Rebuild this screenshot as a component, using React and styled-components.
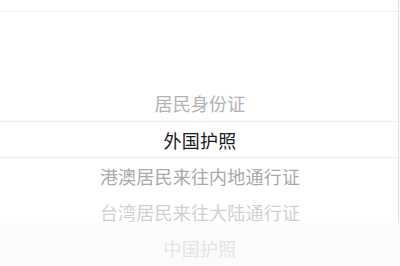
import React from 'react';
import styled, { createGlobalStyle } from 'styled-components';

const GlobalStyle = createGlobalStyle`
  html, body {
    margin: 0;
    padding: 0;
    background: #fff;
  }
  body {
    font-family: "Noto Sans CJK SC", "Noto Sans", sans-serif;
  }
`;

const Screen = styled.div`
  width: 400px;
  height: 266px;
  overflow: hidden;
  display: flex;
  flex-direction: column;
  background: linear-gradient(to bottom, #fff 0, #fff 223px, #fdfafa 224px);
`;

const Panel = styled.div`
  width: 398px;
  height: 223px;
  border-right: 1px solid #dedede;
  display: flex;
  flex-direction: column;
  flex-shrink: 0;
`;

const TopBar = styled.div`
  height: 11px;
  border-bottom: 1px solid #f0f0f0;
  flex-shrink: 0;
`;

const Wheel = styled.ul`
  list-style: none;
  margin: 0;
  padding: 73px 0 0;
  width: 400px;
  display: flex;
  flex-direction: column;
`;

const Option = styled.li`
  height: 36px;
  flex-shrink: 0;
  display: flex;
  align-items: center;
  justify-content: center;
  font-size: 18px;
  letter-spacing: 0.2px;
  color: ${p => p.$tone};
  box-sizing: border-box;
  ${p => p.$active && `
    border-top: 1px solid #ececec;
    border-bottom: 1px solid #ececec;
    height: 37px;
  `}
`;

const options = [
  { label: '居民身份证', tone: '#b2b2b2' },
  { label: '外国护照', tone: '#1a1a1a', active: true },
  { label: '港澳居民来往内地通行证', tone: '#a9a9a9' },
  { label: '台湾居民来往大陆通行证', tone: '#d0d0d0' },
  { label: '中国护照', tone: '#e4e4e4' },
];

export default function App() {
  return (
    <>
      <GlobalStyle />
      <Screen>
        <Panel>
          <TopBar />
          <Wheel>
            {options.map(o => (
              <Option key={o.label} $tone={o.tone} $active={o.active}>
                {o.label}
              </Option>
            ))}
          </Wheel>
        </Panel>
      </Screen>
    </>
  );
}
